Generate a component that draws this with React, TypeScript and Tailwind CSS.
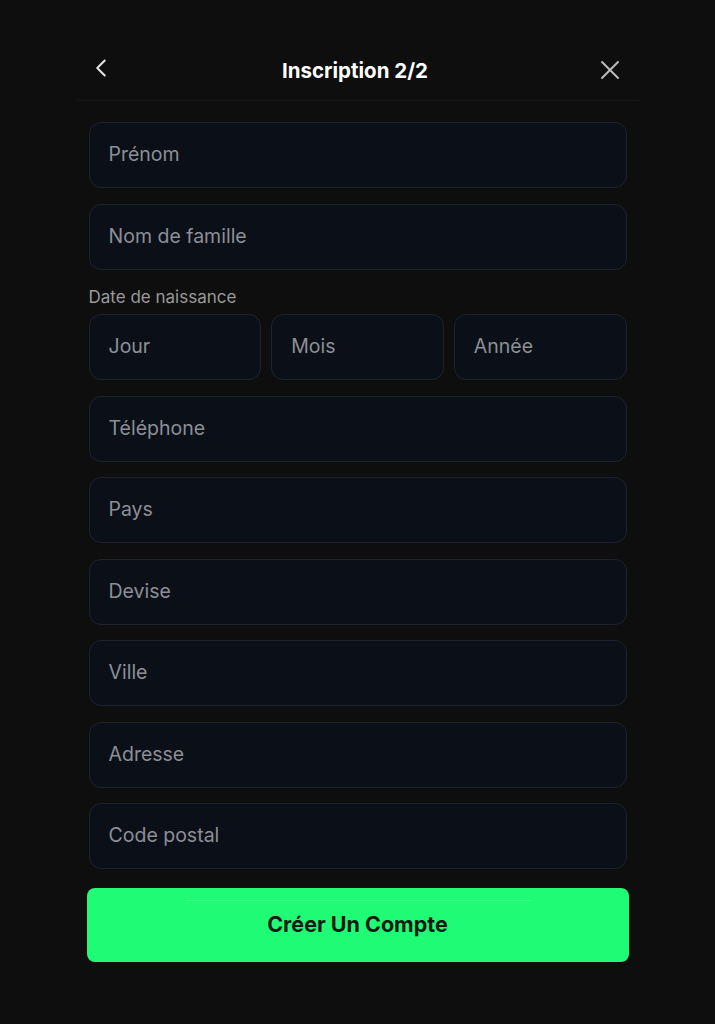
import { ChevronLeft, X } from "lucide-react";

const fields = ["Téléphone", "Pays", "Devise", "Ville", "Adresse", "Code postal"];

function Field({ label }: { label: string }) {
  return (
    <div className="h-[66px] flex items-center px-[19px] rounded-[12px] border border-[#1d222c] bg-[#0b0f18] text-[19.5px] text-[#8c8f96]">
      {label}
    </div>
  );
}

export default function App() {
  return (
    <div className="min-h-[1024px] bg-[#0e0e0e] font-['Inter',sans-serif]">
      <div className="w-[562px] mx-auto pt-[43px]">
        <div className="h-[58px] flex items-center justify-between pl-[9px] pr-[12px] border-b border-[#171717]">
          <ChevronLeft className="w-[30px] h-[30px] text-[#e5e5e5] -mt-[7px]" strokeWidth={1.6} />
          <h1 className="text-[20.5px] font-bold text-white -mt-[1px]">Inscription 2/2</h1>
          <X className="w-[32px] h-[32px] text-[#bdbdbd] -mt-[3px]" strokeWidth={1.4} />
        </div>
        <div className="px-[12px] pt-[21px] flex flex-col gap-[15.5px]">
          <Field label="Prénom" />
          <Field label="Nom de famille" />
          <div className="flex flex-col gap-[6px]">
            <span className="text-[17px] leading-[22px] text-[#9a9a9a] mt-[1px]">Date de naissance</span>
            <div className="grid grid-cols-3 gap-[10px]">
              <Field label="Jour" />
              <Field label="Mois" />
              <Field label="Année" />
            </div>
          </div>
          {fields.map((f) => (
            <Field key={f} label={f} />
          ))}
          <button
            type="button"
            className="relative -mx-[2px] mt-[3px] h-[74px] rounded-[8px] bg-[#20fb76] text-[21.5px] font-bold text-[#0f1a13]"
          >
            <span className="absolute left-[98px] right-[98px] top-[12px] h-px bg-[#3dff88]" />
            Créer Un Compte
          </button>
        </div>
      </div>
    </div>
  );
}
